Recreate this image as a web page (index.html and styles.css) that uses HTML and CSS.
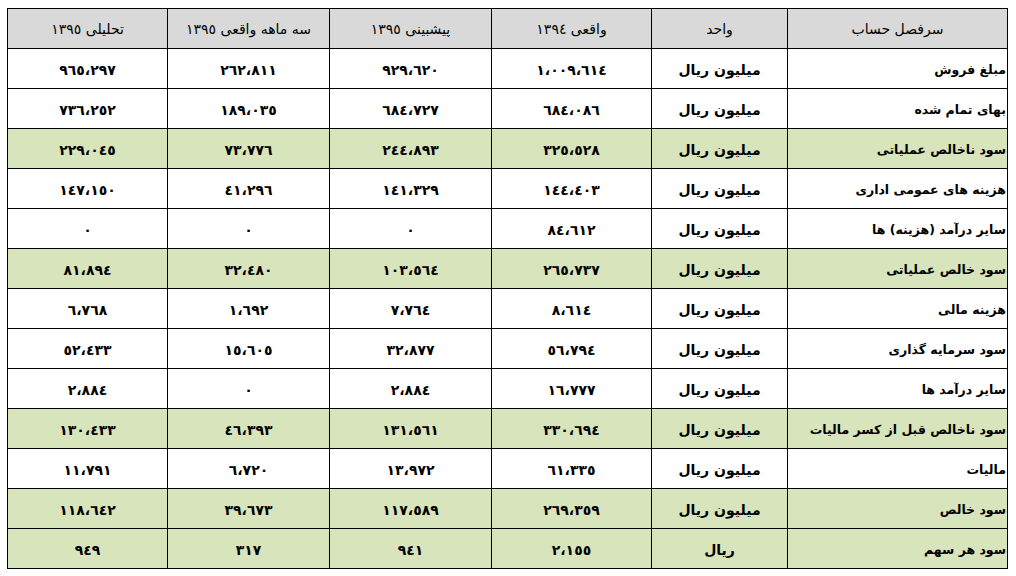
FILE: index.html
```html
<!DOCTYPE html>
<html lang="fa" dir="rtl">
<head>
<meta charset="utf-8">
<link rel="stylesheet" href="styles.css">
</head>
<body>
<table class="fin">
<colgroup>
<col class="c-label"><col class="c-unit"><col class="c-num"><col class="c-num2"><col class="c-num2"><col class="c-num">
</colgroup>
<thead>
<tr><th>سرفصل حساب</th><th>واحد</th><th>واقعی ١٣٩٤</th><th>پیشبینی ١٣٩٥</th><th>سه ماهه واقعی ١٣٩٥</th><th>تحلیلی ١٣٩٥</th></tr>
</thead>
<tbody>
<tr><td class="label">مبلغ فروش</td><td>میلیون ریال</td><td>١،٠٠٩،٦١٤</td><td>٩٢٩،٦٢٠</td><td>٢٦٢،٨١١</td><td>٩٦٥،٢٩٧</td></tr>
<tr><td class="label">بهای تمام شده</td><td>میلیون ریال</td><td>٦٨٤،٠٨٦</td><td>٦٨٤،٧٢٧</td><td>١٨٩،٠٣٥</td><td>٧٣٦،٢٥٢</td></tr>
<tr class="hl"><td class="label">سود ناخالص عملیاتی</td><td>میلیون ریال</td><td>٣٢٥،٥٢٨</td><td>٢٤٤،٨٩٣</td><td>٧٣،٧٧٦</td><td>٢٢٩،٠٤٥</td></tr>
<tr><td class="label">هزینه های عمومی اداری</td><td>میلیون ریال</td><td>١٤٤،٤٠٣</td><td>١٤١،٣٢٩</td><td>٤١،٢٩٦</td><td>١٤٧،١٥٠</td></tr>
<tr><td class="label">سایر درآمد (هزینه) ها</td><td>میلیون ریال</td><td>٨٤،٦١٢</td><td>٠</td><td>٠</td><td>٠</td></tr>
<tr class="hl"><td class="label">سود خالص عملیاتی</td><td>میلیون ریال</td><td>٢٦٥،٧٣٧</td><td>١٠٣،٥٦٤</td><td>٣٢،٤٨٠</td><td>٨١،٨٩٤</td></tr>
<tr><td class="label">هزینه مالی</td><td>میلیون ریال</td><td>٨،٦١٤</td><td>٧،٧٦٤</td><td>١،٦٩٢</td><td>٦،٧٦٨</td></tr>
<tr><td class="label">سود سرمایه گذاری</td><td>میلیون ریال</td><td>٥٦،٧٩٤</td><td>٣٢،٨٧٧</td><td>١٥،٦٠٥</td><td>٥٢،٤٣٣</td></tr>
<tr><td class="label">سایر درآمد ها</td><td>میلیون ریال</td><td>١٦،٧٧٧</td><td>٢،٨٨٤</td><td>٠</td><td>٢،٨٨٤</td></tr>
<tr class="hl"><td class="label">سود ناخالص قبل از کسر مالیات</td><td>میلیون ریال</td><td>٣٣٠،٦٩٤</td><td>١٣١،٥٦١</td><td>٤٦،٣٩٣</td><td>١٣٠،٤٣٣</td></tr>
<tr><td class="label">مالیات</td><td>میلیون ریال</td><td>٦١،٣٣٥</td><td>١٣،٩٧٢</td><td>٦،٧٢٠</td><td>١١،٧٩١</td></tr>
<tr class="hl"><td class="label">سود خالص</td><td>میلیون ریال</td><td>٢٦٩،٣٥٩</td><td>١١٧،٥٨٩</td><td>٣٩،٦٧٣</td><td>١١٨،٦٤٢</td></tr>
<tr class="hl"><td class="label">سود هر سهم</td><td>ریال</td><td>٢،١٥٥</td><td>٩٤١</td><td>٣١٧</td><td>٩٤٩</td></tr>
</tbody>
</table>
</body>
</html>
```
FILE: styles.css
```css
html, body {
  margin: 0;
  padding: 0;
  background: #ffffff;
}
body {
  padding: 8px 8px 0 8px;
  font-family: "DejaVu Sans", "Noto Sans", sans-serif;
  color: #000;
}
.fin {
  border-collapse: collapse;
  table-layout: fixed;
  width: 1000px;
}
.c-label { width: 220px; }
.c-unit { width: 136px; }
.c-num { width: 160px; }
.c-num2 { width: 162px; }
.fin tr {
  height: 40px;
}
.fin th, .fin td {
  border: 1px solid #000;
  padding: 0 2px;
  line-height: 16px;
  text-align: center;
  vertical-align: middle;
  font-size: 14px;
  white-space: nowrap;
}
.fin th {
  background: #d9d9d9;
  font-weight: normal;
  font-size: 14px;
}
.fin td {
  font-weight: bold;
  padding-top: 3px;
}
.fin td.label {
  text-align: right;
  font-size: 12.5px;
  padding-right: 1px;
}
.fin tr.hl td {
  background: #d8e4bc;
}
```
